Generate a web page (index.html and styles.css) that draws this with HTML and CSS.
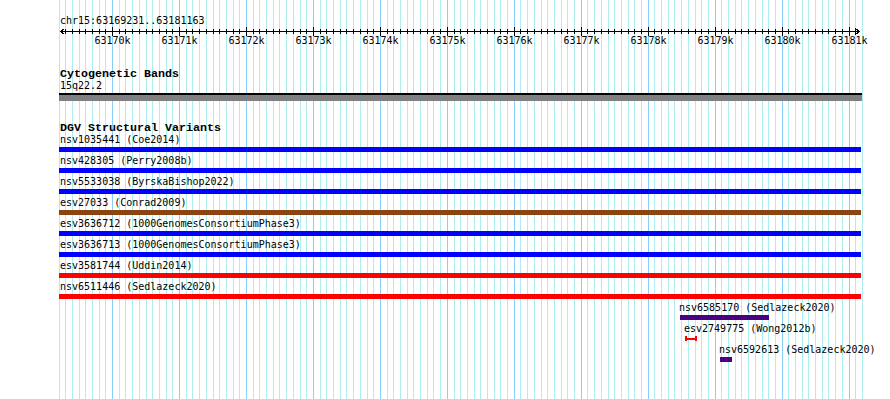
FILE: index.html
```html
<!DOCTYPE html>
<html lang="en">
<head>
    <meta charset="UTF-8">
    <title>chr15:63169231..63181163</title>
    <link rel="stylesheet" href="styles.css">
</head>
<body>
    <div class="panel">
        <svg class="grid" id="grid" width="890" height="399"></svg>
        <div class="content">
            <div class="locus">chr15:63169231..63181163</div>
            <svg class="ruler" id="ruler" width="890" height="20"></svg>

            <div class="track">
                <div class="track-title">Cytogenetic Bands</div>
                <div class="feature">
                    <div class="label full">15q22.2</div>
                    <div class="band"></div>
                </div>
            </div>

            <div class="track">
                <div class="track-title">DGV Structural Variants</div>
                <div class="feature">
                    <div class="label full">nsv1035441 (Coe2014)</div>
                    <div class="bar full gain"></div>
                </div>
                <div class="feature">
                    <div class="label full">nsv428305 (Perry2008b)</div>
                    <div class="bar full gain"></div>
                </div>
                <div class="feature">
                    <div class="label full">nsv5533038 (ByrskaBishop2022)</div>
                    <div class="bar full gain"></div>
                </div>
                <div class="feature">
                    <div class="label full">esv27033 (Conrad2009)</div>
                    <div class="bar full both"></div>
                </div>
                <div class="feature">
                    <div class="label full">esv3636712 (1000GenomesConsortiumPhase3)</div>
                    <div class="bar full gain"></div>
                </div>
                <div class="feature">
                    <div class="label full">esv3636713 (1000GenomesConsortiumPhase3)</div>
                    <div class="bar full gain"></div>
                </div>
                <div class="feature">
                    <div class="label full">esv3581744 (Uddin2014)</div>
                    <div class="bar full loss"></div>
                </div>
                <div class="feature">
                    <div class="label full">nsv6511446 (Sedlazeck2020)</div>
                    <div class="bar full loss"></div>
                </div>
                <div class="feature">
                    <div class="label" style="margin-left: 679px">nsv6585170 (Sedlazeck2020)</div>
                    <div class="bar complex" style="margin-left: 680px; width: 89px"></div>
                </div>
                <div class="feature">
                    <div class="label" style="margin-left: 684px">esv2749775 (Wong2012b)</div>
                    <svg class="marker" style="margin-left: 685px" width="12" height="5">
                        <path d="M1 0V5M11 0V5M1 2.5H11" />
                    </svg>
                </div>
                <div class="feature">
                    <div class="label" style="margin-left: 719px">nsv6592613 (Sedlazeck2020)</div>
                    <div class="bar complex" style="margin-left: 720px; width: 12px"></div>
                </div>
            </div>
        </div>
    </div>

    <script>
        // 100 bp per grid step, 63170k sits at x=112.6
        var SVG = 'http://www.w3.org/2000/svg';
        var STEP = 6.695;
        var grid = document.getElementById('grid');
        var ruler = document.getElementById('ruler');

        function line(parent, x1, y1, x2, y2, cls) {
            var l = document.createElementNS(SVG, 'line');
            l.setAttribute('x1', x1);
            l.setAttribute('y1', y1);
            l.setAttribute('x2', x2);
            l.setAttribute('y2', y2);
            l.setAttribute('class', cls);
            parent.appendChild(l);
        }

        for (var i = 0; i <= 120; i++) {
            var x = Math.floor(112.6 + (i - 8) * STEP) + 0.5;
            var major = (i - 8) % 10 === 0;
            line(grid, x, 0, x, 399, major ? 'grid-major' : 'grid-minor');

            if (i === 0 || i === 120) continue;
            if (major) {
                line(ruler, x, 0, x, 9, 'tick');
                var t = document.createElementNS(SVG, 'text');
                t.setAttribute('x', x);
                t.setAttribute('y', 17);
                t.setAttribute('class', 'tick-label');
                t.textContent = (63170 + (i - 8) / 10) + 'k';
                ruler.appendChild(t);
            } else {
                line(ruler, x, 2, x, 7, 'tick');
            }
        }

        line(ruler, 60, 4.5, 860, 4.5, 'tick');
        line(ruler, 60.5, 4.5, 64.5, 1.5, 'tick');
        line(ruler, 60.5, 4.5, 64.5, 7.5, 'tick');
        line(ruler, 859.5, 4.5, 855.5, 1.5, 'tick');
        line(ruler, 859.5, 4.5, 855.5, 7.5, 'tick');
    </script>
</body>
</html>
```

FILE: styles.css
```css
body {
    margin: 0;
    background: #fff;
    font-family: 'DejaVu Sans Mono', 'Liberation Mono', monospace;
    font-size: 10px;
    color: #000;
}
.panel {
    position: relative;
    width: 890px;
    height: 399px;
    overflow: hidden;
    background: #fff;
}
.grid {
    position: absolute;
    top: 0;
    left: 0;
    shape-rendering: crispEdges;
}
.grid-minor {
    stroke: #afeeee;
    stroke-width: 1;
}
.grid-major {
    stroke: #87cefa;
    stroke-width: 1;
}
.content {
    position: relative;
    padding-top: 17px;
}
.locus {
    margin-left: 60px;
    height: 10px;
    line-height: 8.4px;
    white-space: nowrap;
}
.ruler {
    display: block;
    shape-rendering: crispEdges;
}
.tick {
    stroke: #000;
    stroke-width: 1;
}
.tick-label {
    font-family: 'DejaVu Sans Mono', 'Liberation Mono', monospace;
    font-size: 10px;
    text-anchor: middle;
    fill: #000;
}
.track {
    margin-top: 21px;
}
.track-title {
    margin-left: 60px;
    margin-bottom: 2px;
    height: 12px;
    line-height: 12px;
    font-family: 'Liberation Mono', monospace;
    font-size: 11.67px;
    font-weight: bold;
    white-space: nowrap;
}
.feature {
    margin-bottom: 5px;
}
.label {
    height: 10px;
    line-height: 8.4px;
    white-space: nowrap;
}
.label.full {
    margin-left: 60px;
}
.band {
    margin: 1px 0 0 59px;
    width: 803px;
    height: 6px;
    border-top: 2px solid #000;
    background: #808080;
}
.bar {
    margin-top: 1px;
    height: 5px;
}
.bar.full {
    margin-left: 59px;
    width: 802px;
}
.gain {
    background: #0000ff;
}
.loss {
    background: #ff0000;
}
.both {
    background: #8b4513;
}
.complex {
    background: #4b0082;
}
.marker {
    display: block;
    margin-top: 1px;
    shape-rendering: crispEdges;
}
.marker path {
    stroke: #ff0000;
    stroke-width: 2;
    fill: none;
}
```
